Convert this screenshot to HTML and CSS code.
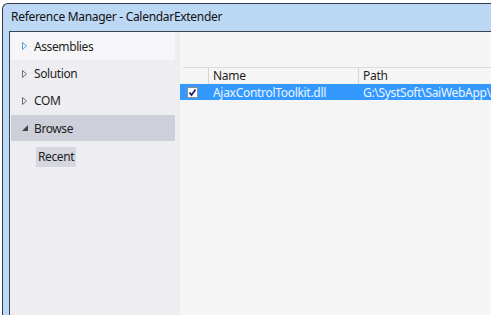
FILE: index.html
```html
<!DOCTYPE html>
<html lang="en">
<head>
    <meta charset="UTF-8">
    <title>Reference Manager - CalendarExtender</title>
    <link rel="stylesheet" href="styles.css">
</head>
<body>
    <div class="window">
        <div class="titlebar">Reference Manager - CalendarExtender</div>
        <div class="client">
            <div class="sidebar">
                <div class="nav-item hover">
                    <svg class="arrow" width="6" height="8" viewBox="0 0 6 8"><path d="M0.5 0.5 L4.5 4 L0.5 7.5 Z" fill="none" stroke="#5b9ad4"/></svg>
                    <span>Assemblies</span>
                </div>
                <div class="nav-item">
                    <svg class="arrow" width="6" height="8" viewBox="0 0 6 8"><path d="M0.5 0.5 L4.5 4 L0.5 7.5 Z" fill="none" stroke="#707070"/></svg>
                    <span>Solution</span>
                </div>
                <div class="nav-item">
                    <svg class="arrow" width="6" height="8" viewBox="0 0 6 8"><path d="M0.5 0.5 L4.5 4 L0.5 7.5 Z" fill="none" stroke="#707070"/></svg>
                    <span>COM</span>
                </div>
                <div class="nav-item selected">
                    <svg class="arrow" width="6" height="8" viewBox="0 0 6 8"><path d="M6 1 L6 7 L0 7 Z" fill="#444"/></svg>
                    <span>Browse</span>
                </div>
                <div class="sub-item"><span class="recent">Recent</span></div>
            </div>
            <div class="main">
                <div class="list">
                    <div class="list-header">
                        <div class="col col-check"></div>
                        <div class="col col-name">Name</div>
                        <div class="col col-path">Path</div>
                    </div>
                    <div class="list-row selected">
                        <div class="col col-check">
                            <svg width="11" height="11" viewBox="0 0 11 11">
                                <rect x="0.5" y="0.5" width="10" height="10" fill="#fff" stroke="#8e8f8f"/>
                                <path d="M2.5 5.5 L4.5 8 L8.5 2.5" fill="none" stroke="#1f1f6e" stroke-width="1.8"/>
                            </svg>
                        </div>
                        <div class="col col-name">AjaxControlToolkit.dll</div>
                        <div class="col col-path">G:\SystSoft\SaiWebApp\</div>
                    </div>
                </div>
            </div>
        </div>
    </div>
</body>
</html>
```

FILE: styles.css
```css
body {
    margin: 0;
    background: #ffffff;
    font-family: "Noto Sans", "Open Sans", sans-serif;
    font-size: 12px;
    color: #1e1e1e;
    overflow: hidden;
}

.window {
    margin: 3px 0 0 2px;
    width: 489px;
    height: 312px;
    box-sizing: border-box;
    border-left: 1px solid #2f3a46;
    border-top: 1px solid #2f3a46;
    border-top-left-radius: 6px;
    background: #bcd8f4;
    display: flex;
    flex-direction: column;
}

.titlebar {
    height: 27px;
    line-height: 26px;
    padding-left: 8px;
    color: #111;
    white-space: nowrap;
    letter-spacing: -0.3px;
}

.client {
    flex: 1;
    display: flex;
    margin-left: 6px;
    border-left: 1px solid #3a4654;
    border-top: 1px solid #3a4654;
    min-height: 0;
}

.sidebar {
    width: 170px;
    flex-shrink: 0;
    background: #eeeef2;
    letter-spacing: -0.4px;
}

.nav-item {
    height: 27px;
    margin: 0 5px 0 1px;
    display: flex;
    align-items: center;
    padding-left: 11px;
}

.nav-item.hover {
    height: 28px;
    background: #f6f6f8;
}

.nav-item.selected {
    background: #cdcfd9;
    height: 26px;
    margin-top: 1px;
}

.arrow {
    margin-right: 6px;
    flex-shrink: 0;
}

.sub-item {
    padding: 6px 0 0 26px;
}

.recent {
    display: inline-block;
    background: #d5d6de;
    padding: 0 2px;
    height: 20px;
    line-height: 20px;
}

.main {
    flex: 1;
    min-width: 0;
    background: #f5f5f5;
    padding-top: 35px;
}

.list {
    letter-spacing: -0.3px;
}

.list-header {
    display: flex;
    height: 16px;
    line-height: 15px;
    border-top: 1px solid #dcdcdc;
    margin-left: 3px;
}

.list-header .col-check {
    width: 25px;
}

.list-header .col-name,
.list-header .col-path {
    border-left: 1px solid #d6d6d6;
}

.col {
    box-sizing: border-box;
    white-space: nowrap;
}

.col-check {
    width: 28px;
    flex-shrink: 0;
}

.col-name {
    width: 150px;
    padding-left: 4px;
    flex-shrink: 0;
}

.col-path {
    flex: 1;
    padding-left: 4px;
}

.list-row {
    display: flex;
    height: 16px;
    line-height: 15px;
    align-items: center;
}

.list-row.selected {
    background: #3399ff;
    color: #eef5ff;
}

.list-row .col-check {
    padding-left: 7px;
    display: flex;
    align-items: center;
}

.list-row .col-name,
.list-row .col-path {
    padding-left: 5px;
}
```
